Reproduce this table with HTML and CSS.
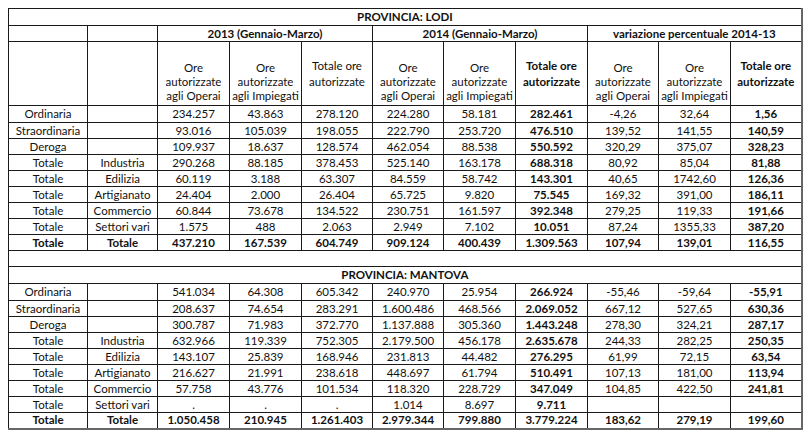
FILE: index.html
```html
<!DOCTYPE html>
<html lang="it">
<head>
<meta charset="utf-8">
<title>Cassa integrazione - Lodi e Mantova</title>
<link rel="stylesheet" href="styles.css">
</head>
<body>
<table class="cig">
  <colgroup>
    <col class="c-type"><col class="c-sector">
    <col class="c72"><col class="c72"><col class="c71">
    <col class="c71"><col class="c72"><col class="c72">
    <col class="c71"><col class="c72"><col class="c71">
  </colgroup>
  <tbody>
    <tr class="r-title"><td colspan="11" class="b">PROVINCIA: LODI</td></tr>
    <tr class="r-year"><td></td><td></td><td colspan="3" class="b">2013 (Gennaio-Marzo)</td><td colspan="3" class="b">2014 (Gennaio-Marzo)</td><td colspan="3" class="b">variazione percentuale 2014-13</td></tr>
    <tr class="r-head"><td></td><td></td>
      <td class="h3">Ore<br>autorizzate<br>agli Operai</td><td class="h3">Ore<br>autorizzate<br>agli Impiegati</td><td class="h2">Totale ore<br>autorizzate</td>
      <td class="h3">Ore<br>autorizzate<br>agli Operai</td><td class="h3">Ore<br>autorizzate<br>agli Impiegati</td><td class="h2 b">Totale ore<br>autorizzate</td>
      <td class="h3">Ore<br>autorizzate<br>agli Operai</td><td class="h3">Ore<br>autorizzate<br>agli Impiegati</td><td class="h2 b">Totale ore<br>autorizzate</td></tr>
    <tr class="r-data r-first"><td>Ordinaria</td><td></td><td>234.257</td><td>43.863</td><td>278.120</td><td>224.280</td><td>58.181</td><td class="b">282.461</td><td>-4,26</td><td>32,64</td><td class="b">1,56</td></tr>
    <tr class="r-data"><td>Straordinaria</td><td></td><td>93.016</td><td>105.039</td><td>198.055</td><td>222.790</td><td>253.720</td><td class="b">476.510</td><td>139,52</td><td>141,55</td><td class="b">140,59</td></tr>
    <tr class="r-data"><td>Deroga</td><td></td><td>109.937</td><td>18.637</td><td>128.574</td><td>462.054</td><td>88.538</td><td class="b">550.592</td><td>320,29</td><td>375,07</td><td class="b">328,23</td></tr>
    <tr class="r-data"><td>Totale</td><td>Industria</td><td>290.268</td><td>88.185</td><td>378.453</td><td>525.140</td><td>163.178</td><td class="b">688.318</td><td>80,92</td><td>85,04</td><td class="b">81,88</td></tr>
    <tr class="r-data"><td>Totale</td><td>Edilizia</td><td>60.119</td><td>3.188</td><td>63.307</td><td>84.559</td><td>58.742</td><td class="b">143.301</td><td>40,65</td><td>1742,60</td><td class="b">126,36</td></tr>
    <tr class="r-data"><td>Totale</td><td>Artigianato</td><td>24.404</td><td>2.000</td><td>26.404</td><td>65.725</td><td>9.820</td><td class="b">75.545</td><td>169,32</td><td>391,00</td><td class="b">186,11</td></tr>
    <tr class="r-data"><td>Totale</td><td>Commercio</td><td>60.844</td><td>73.678</td><td>134.522</td><td>230.751</td><td>161.597</td><td class="b">392.348</td><td>279,25</td><td>119,33</td><td class="b">191,66</td></tr>
    <tr class="r-data"><td>Totale</td><td>Settori vari</td><td>1.575</td><td>488</td><td>2.063</td><td>2.949</td><td>7.102</td><td class="b">10.051</td><td>87,24</td><td>1355,33</td><td class="b">387,20</td></tr>
    <tr class="r-data r-total"><td>Totale</td><td>Totale</td><td>437.210</td><td>167.539</td><td>604.749</td><td>909.124</td><td>400.439</td><td>1.309.563</td><td>107,94</td><td>139,01</td><td>116,55</td></tr>
    <tr class="r-gap"><td colspan="11"></td></tr>
    <tr class="r-title"><td colspan="11" class="b">PROVINCIA: MANTOVA</td></tr>
    <tr class="r-data r-first"><td>Ordinaria</td><td></td><td>541.034</td><td>64.308</td><td>605.342</td><td>240.970</td><td>25.954</td><td class="b">266.924</td><td>-55,46</td><td>-59,64</td><td class="b">-55,91</td></tr>
    <tr class="r-data"><td>Straordinaria</td><td></td><td>208.637</td><td>74.654</td><td>283.291</td><td>1.600.486</td><td>468.566</td><td class="b">2.069.052</td><td>667,12</td><td>527,65</td><td class="b">630,36</td></tr>
    <tr class="r-data"><td>Deroga</td><td></td><td>300.787</td><td>71.983</td><td>372.770</td><td>1.137.888</td><td>305.360</td><td class="b">1.443.248</td><td>278,30</td><td>324,21</td><td class="b">287,17</td></tr>
    <tr class="r-data"><td>Totale</td><td>Industria</td><td>632.966</td><td>119.339</td><td>752.305</td><td>2.179.500</td><td>456.178</td><td class="b">2.635.678</td><td>244,33</td><td>282,25</td><td class="b">250,35</td></tr>
    <tr class="r-data"><td>Totale</td><td>Edilizia</td><td>143.107</td><td>25.839</td><td>168.946</td><td>231.813</td><td>44.482</td><td class="b">276.295</td><td>61,99</td><td>72,15</td><td class="b">63,54</td></tr>
    <tr class="r-data"><td>Totale</td><td>Artigianato</td><td>216.627</td><td>21.991</td><td>238.618</td><td>448.697</td><td>61.794</td><td class="b">510.491</td><td>107,13</td><td>181,00</td><td class="b">113,94</td></tr>
    <tr class="r-data"><td>Totale</td><td>Commercio</td><td>57.758</td><td>43.776</td><td>101.534</td><td>118.320</td><td>228.729</td><td class="b">347.049</td><td>104,85</td><td>422,50</td><td class="b">241,81</td></tr>
    <tr class="r-data"><td>Totale</td><td>Settori vari</td><td>.</td><td>.</td><td>.</td><td>1.014</td><td>8.697</td><td class="b">9.711</td><td></td><td></td><td></td></tr>
    <tr class="r-data r-total"><td>Totale</td><td>Totale</td><td>1.050.458</td><td>210.945</td><td>1.261.403</td><td>2.979.344</td><td>799.880</td><td>3.779.224</td><td>183,62</td><td>279,19</td><td>199,60</td></tr>
  </tbody>
</table>
</body>
</html>
```
FILE: styles.css
```css
html, body {
  margin: 0;
  padding: 0;
  background: #ffffff;
}
body {
  padding: 8px 0 0 8px;
  font-family: Lato, "Liberation Sans", sans-serif;
  font-size: 11.5px;
  color: #111;
}
.cig {
  border-collapse: collapse;
  table-layout: fixed;
  width: 794px;
  border-left: 1px solid #555;
  border-top: 1px solid #333;
  border-right: 2px solid #666;
  border-bottom: 2px solid #666;
}
.c-type { width: 79px; }
.c-sector { width: 70px; }
.c72 { width: 72px; }
.c71 { width: 71px; }
.cig td {
  border: 1px solid #1a1a1a;
  padding: 0;
  text-align: center;
  vertical-align: middle;
  line-height: 14px;
  white-space: nowrap;
  overflow: hidden;
}
.cig .b { font-weight: 700; }
.r-title { height: 17px; }
.r-year { height: 16px; }
.r-head { height: 64px; }
.r-data { height: 16px; }
.r-data.r-first { height: 17px; }
.r-gap { height: 16px; }
.r-total td { font-weight: 700; }
.cig td.h3 {
  vertical-align: bottom;
  padding-bottom: 2px;
}
.cig td.h2 {
  vertical-align: middle;
  line-height: 16px;
}
```
